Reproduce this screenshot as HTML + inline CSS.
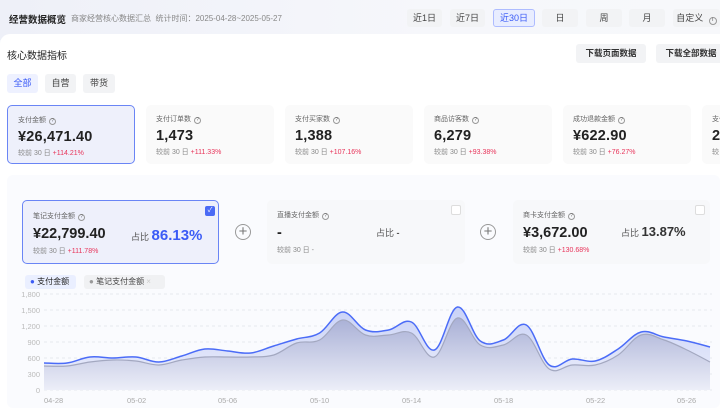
<!DOCTYPE html>
<html><head><meta charset="utf-8"><style>
*{box-sizing:border-box;margin:0;padding:0}
body{width:720px;height:408px;overflow:hidden;font-family:"Liberation Sans","Noto Sans CJK SC",sans-serif;background:#f3f5fb;position:relative;color:#222}
.a{position:absolute}
.hdr{left:0;top:0;width:720px;height:40px;background:linear-gradient(90deg,#eef0f8,#f6f7fb 60%,#f7f8fb)}
.main{left:0;top:34px;width:720px;height:374px;background:#fff;border-radius:10px 0 0 0}
.btn{position:absolute;height:18px;background:#f2f3f5;border-radius:3px;font-size:9px;color:#444;text-align:center;line-height:18px}
.act{background:#e8edff;border:1px solid #aebcff;color:#3b5bf6;line-height:16px}
.card{position:absolute;top:105px;width:128px;height:59px;background:#fafafa;border-radius:5px;padding:9px 0 0 10px}
.card .l{font-size:7px;color:#666}
.card .v{font-size:14.5px;font-weight:bold;color:#222;margin-top:4px;letter-spacing:.2px}
.card .c{font-size:7px;color:#888;margin-top:3px}
.red{color:#e8345a}
.q{display:inline-block;width:7px;height:7px;border:1px solid #999;border-radius:50%;font-size:5px;line-height:5px;text-align:center;margin-left:3px;vertical-align:0}
.sc{position:absolute;top:200px;height:64px;border-radius:5px;padding:10px 0 0 10px}
.sc .l{font-size:7px;color:#666}
.sc .v{font-size:14.5px;font-weight:bold;margin-top:5px}
.sc .c{font-size:7px;color:#888;margin-top:4px}
.sc .p{position:absolute;top:25px;font-size:9px;color:#555}
.cb{position:absolute;top:5px;width:10px;height:10px;border:1px solid #ddd;border-radius:2px;background:#fff}
.plus{position:absolute;top:224px;width:16px;height:16px;border:1px solid #999;border-radius:50%;text-align:center;line-height:13px;font-size:15px;color:#777}
.yl{position:absolute;left:10px;width:30px;text-align:right;font-size:7.5px;color:#bbb}
.xl{position:absolute;top:396px;font-size:7.5px;color:#aaa}
</style></head><body>
<div class="a hdr"></div>
<div class="a" style="left:9px;top:12px;font-size:9.5px;font-weight:bold;color:#222">经营数据概览</div>
<div class="a" style="left:71px;top:13px;font-size:8px;color:#888">商家经营核心数据汇总&nbsp; 统计时间：2025-04-28~2025-05-27</div>
<div class="btn" style="left:407px;top:9px;width:35px">近1日</div>
<div class="btn" style="left:450px;top:9px;width:35px">近7日</div>
<div class="btn act" style="left:493px;top:9px;width:42px">近30日</div>
<div class="btn" style="left:542px;top:9px;width:36px">日</div>
<div class="btn" style="left:586px;top:9px;width:36px">周</div>
<div class="btn" style="left:629px;top:9px;width:36px">月</div>
<div class="btn" style="left:673px;top:9px;width:47px">自定义 <span class="q" style="width:8px;height:8px">i</span></div>
<div class="a main"></div>
<div class="a" style="left:7px;top:47px;font-size:10px;color:#222">核心数据指标</div>
<div class="btn" style="left:576px;top:44px;width:70px;height:19px;font-size:8.5px;font-weight:bold;color:#333">下载页面数据</div>
<div class="btn" style="left:656px;top:44px;width:70px;height:19px;font-size:8.5px;font-weight:bold;color:#333">下载全部数据</div>
<div class="btn" style="left:7px;top:74px;width:31px;height:19px;line-height:19px;background:#eef1ff;color:#3b5bf6">全部</div>
<div class="btn" style="left:45px;top:74px;width:31px;height:19px;line-height:19px">自营</div>
<div class="btn" style="left:83px;top:74px;width:32px;height:19px;line-height:19px">带货</div>

<div class="card" style="left:7px;background:#eef0fb;border:1px solid #6a85f5"><div class="l">支付金额<span class="q">?</span></div><div class="v">¥26,471.40</div><div class="c">较前 30 日 <span class="red">+114.21%</span></div></div>
<div class="card" style="left:146px"><div class="l">支付订单数<span class="q">?</span></div><div class="v">1,473</div><div class="c">较前 30 日 <span class="red">+111.33%</span></div></div>
<div class="card" style="left:285px"><div class="l">支付买家数<span class="q">?</span></div><div class="v">1,388</div><div class="c">较前 30 日 <span class="red">+107.16%</span></div></div>
<div class="card" style="left:424px"><div class="l">商品访客数<span class="q">?</span></div><div class="v">6,279</div><div class="c">较前 30 日 <span class="red">+93.38%</span></div></div>
<div class="card" style="left:563px"><div class="l">成功退款金额<span class="q">?</span></div><div class="v">¥622.90</div><div class="c">较前 30 日 <span class="red">+76.27%</span></div></div>
<div class="card" style="left:702px"><div class="l">支付</div><div class="v">2</div><div class="c">较</div></div>

<div class="a" style="left:7px;top:175px;width:713px;height:233px;background:#fafbfe;border-radius:6px"></div>
<div class="sc" style="left:22px;width:197px;background:#eef0fb;border:1px solid #6a85f5"><div class="l">笔记支付金额<span class="q">?</span></div><div class="v">¥22,799.40</div><div class="c">较前 30 日 <span class="red">+111.78%</span></div>
<div class="p" style="left:108px;top:26px">占比 <span style="font-size:15px;font-weight:bold;color:#3b5bf6">86.13%</span></div>
<div class="cb" style="left:182px;background:#4a6af5;border-color:#4a6af5;color:#fff;font-size:7px;line-height:8px;text-align:center">✓</div></div>
<div class="plus" style="left:235px">+</div>
<div class="sc" style="left:267px;width:198px;background:#f7f8fa"><div class="l">直播支付金额<span class="q">?</span></div><div class="v">-</div><div class="c">较前 30 日 -</div>
<div class="p" style="left:109px;top:26px">占比 <b>-</b></div><div class="cb" style="left:184px"></div></div>
<div class="plus" style="left:480px">+</div>
<div class="sc" style="left:513px;width:197px;background:#f7f8fa"><div class="l">商卡支付金额<span class="q">?</span></div><div class="v">¥3,672.00</div><div class="c">较前 30 日 <span class="red">+130.68%</span></div>
<div class="p" style="left:108px;top:24px">占比 <span style="font-size:13px;font-weight:bold;color:#333">13.87%</span></div><div class="cb" style="left:182px"></div></div>

<div class="a" style="left:25px;top:275px;width:51px;height:14px;background:#eaefff;border-radius:3px;font-size:8px;line-height:14px;padding-left:5px"><span style="color:#3b5bf6">●</span> 支付金额</div>
<div class="a" style="left:84px;top:275px;width:81px;height:14px;background:#f0f1f3;border-radius:3px;font-size:8px;line-height:14px;padding-left:5px;color:#444"><span style="color:#999">●</span> 笔记支付金额 <span style="color:#ccc">×</span></div>

<div class="yl" style="top:290px">1,800</div><div class="yl" style="top:306px">1,500</div><div class="yl" style="top:322px">1,200</div><div class="yl" style="top:338px">900</div><div class="yl" style="top:354px">600</div><div class="yl" style="top:370px">300</div><div class="yl" style="top:386px">0</div>
<svg class="a" style="left:0;top:0" width="720" height="408">
<defs>
<linearGradient id="g1" x1="0" y1="0" x2="0" y2="1"><stop offset="0" stop-color="#c9d2f7"/><stop offset="1" stop-color="#eef0fb"/></linearGradient>
<linearGradient id="g2" x1="0" y1="0" x2="0" y2="1"><stop offset="0" stop-color="#a9b0d6"/><stop offset="1" stop-color="#eceef8"/></linearGradient>
</defs>
<g stroke="#e6e8ee" stroke-dasharray="3,3" stroke-width="1">
<line x1="44" x2="712" y1="294" y2="294"/><line x1="44" x2="712" y1="310" y2="310"/><line x1="44" x2="712" y1="326" y2="326"/><line x1="44" x2="712" y1="342" y2="342"/><line x1="44" x2="712" y1="358" y2="358"/><line x1="44" x2="712" y1="374" y2="374"/><line x1="44" x2="712" y1="390" y2="390"/></g>
<path id="af1" fill="url(#g1)" d=""/>
<path id="af2" fill="url(#g2)" d=""/>
<path id="l2" fill="none" stroke="#a3a8c0" stroke-width="1.2" d=""/>
<path id="l1" fill="none" stroke="#4b6cf7" stroke-width="1.5" d=""/>
</svg>
<script>
var b=[363,363,357,358,357,362,356,349,351,353,346,339,333,312,330,330,322,350,307,341,340,325,365,359,361,349,332,337,341,347];
var g=[366,366,362,360,361,365,360,357,357,357,355,343,340,320,335,335,333,357,318,345,345,335,369,365,365,355,335,340,350,362];
function pts(a){return a.map(function(y,i){return [44+i*666/29,y];});}
function sm(p){var d="M"+p[0][0]+","+p[0][1];for(var i=0;i<p.length-1;i++){var p0=p[i-1]||p[i],p1=p[i],p2=p[i+1],p3=p[i+2]||p2;var t=0.18;
var c1x=p1[0]+(p2[0]-p0[0])*t,c1y=p1[1]+(p2[1]-p0[1])*t,c2x=p2[0]-(p3[0]-p1[0])*t,c2y=p2[1]-(p3[1]-p1[1])*t;
d+=" C"+c1x.toFixed(1)+","+c1y.toFixed(1)+" "+c2x.toFixed(1)+","+c2y.toFixed(1)+" "+p2[0].toFixed(1)+","+p2[1];}return d;}
var d1=sm(pts(b)),d2=sm(pts(g));
document.getElementById("l1").setAttribute("d",d1);document.getElementById("l2").setAttribute("d",d2);
document.getElementById("af1").setAttribute("d",d1+" L710,390 L44,390Z");document.getElementById("af2").setAttribute("d",d2+" L710,390 L44,390Z");
</script>
<div class="xl" style="left:44px">04-28</div><div class="xl" style="left:127px">05-02</div><div class="xl" style="left:218px">05-06</div><div class="xl" style="left:310px">05-10</div><div class="xl" style="left:402px">05-14</div><div class="xl" style="left:494px">05-18</div><div class="xl" style="left:586px">05-22</div><div class="xl" style="left:677px">05-26</div>
</body></html>
